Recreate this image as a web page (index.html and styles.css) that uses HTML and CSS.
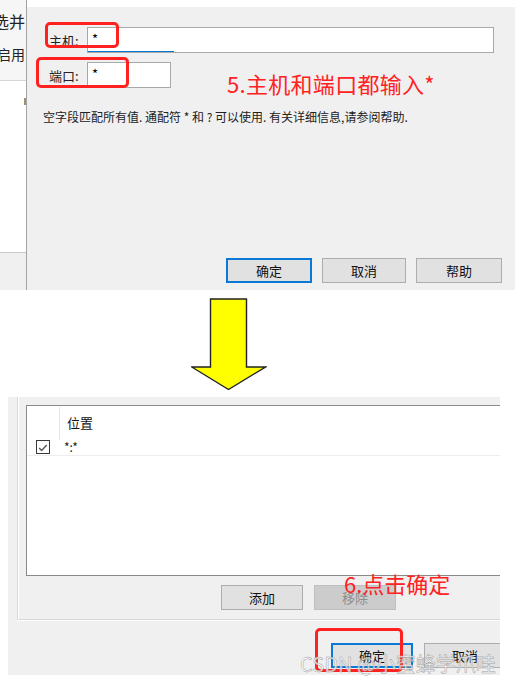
FILE: index.html
```html
<!DOCTYPE html>
<html lang="zh-CN">
<head>
<meta charset="utf-8">
<title>主机和端口</title>
<link rel="stylesheet" href="styles.css">
</head>
<body>
<div class="page">
  <section class="top">
    <div class="strip">
      <div class="strip-head">
        <div class="strip-line l1"><span>选并</span></div>
        <div class="strip-line l2"><span>启用</span></div>
      </div>
      <div class="strip-body"><span class="tick"></span></div>
      <div class="strip-foot"></div>
    </div>
    <div class="dialog">
      <div class="field-row host-row">
        <label class="label">主机:</label>
        <div class="input host-input">*</div>
      </div>
      <div class="field-row port-row">
        <label class="label">端口:</label>
        <div class="input port-input">*</div>
        <div class="note note-5">5.主机和端口都输入*</div>
      </div>
      <p class="desc">空字段匹配所有值. 通配符 * 和 ? 可以使用. 有关详细信息,请参阅帮助.</p>
      <div class="btn-row">
        <button class="btn btn-default w85">确定</button>
        <button class="btn w84">取消</button>
        <button class="btn w85">帮助</button>
      </div>
      <span class="mark mark-host"></span>
      <span class="mark mark-port"></span>
    </div>
  </section>

  <div class="arrow-wrap">
    <svg class="arrow" width="76" height="93" viewBox="0 0 76 93">
      <polygon points="19.5,1 55.5,1 55.5,69 74.5,69 37.5,91.5 0.8,69 19.5,69" fill="#ffff00" stroke="#222" stroke-width="1.4" stroke-linejoin="miter"/>
    </svg>
  </div>

  <section class="bottom-wrap">
    <div class="bottom">
      <div class="group">
        <div class="list">
          <div class="list-head">
            <div class="head-check"></div>
            <div class="head-text">位置</div>
          </div>
          <div class="list-row">
            <div class="row-check">
              <svg class="checkbox" width="14" height="14" viewBox="0 0 14 14">
                <rect x="0.5" y="0.5" width="13" height="13" fill="#fff" stroke="#3a3a3a"/>
                <path d="M3.2 8 L5.6 10.4 L10.8 5" fill="none" stroke="#555" stroke-width="1.4"/>
              </svg>
            </div>
            <div class="row-text">*:*</div>
          </div>
        </div>
        <div class="group-btns">
          <button class="btn w82">添加</button>
          <button class="btn btn-disabled w82">移除</button>
        </div>
        <div class="note note-6">6.点击确定</div>
      </div>
      <div class="dlg-btns">
        <button class="btn btn-default w82">确定</button>
        <button class="btn w82">取消</button>
      </div>
      <span class="mark mark-ok"></span>
    </div>
    <div class="watermark">CSDN @小蜜蜂学爪哇</div>
  </section>
</div>
</body>
</html>
```

FILE: styles.css
```css
* { box-sizing: border-box; }

html, body {
  margin: 0;
  padding: 0;
  background: #ffffff;
}

body {
  font-family: "Noto Sans CJK SC", "Noto Sans", "Liberation Sans", sans-serif;
  color: #000;
}

.page {
  width: 515px;
  overflow: hidden;
}

/* ---------- top dialog ---------- */
.top {
  display: flex;
  height: 290px;
}

.strip {
  width: 27px;
  flex: none;
  display: flex;
  flex-direction: column;
  border-right: 1px solid #a3a3a3;
  overflow: hidden;
}

.strip-head {
  height: 81px;
  background: #f6f6f6;
  border-bottom: 1px solid #d6d6d6;
}

.strip-line {
  width: 26px;
  overflow: hidden;
  white-space: nowrap;
  color: #222;
}

.strip-line span {
  display: block;
  width: 60px;
}

.strip-line.l1 {
  font-size: 16px;
  line-height: 18px;
  margin-top: 12px;
}

.strip-line.l1 span { margin-left: -7px; }

.strip-line.l2 {
  font-size: 14px;
  line-height: 18px;
  margin-top: 15px;
}

.strip-line.l2 span { margin-left: -3px; }

.strip-body {
  height: 172px;
  background: #ffffff;
  border-bottom: 1px solid #c8c8c8;
  position: relative;
}

.tick {
  position: absolute;
  left: 24px;
  top: 17px;
  width: 2px;
  height: 7px;
  background: #a09070;
}

.strip-foot {
  flex: 1;
  background: #f0f0f0;
}

.dialog {
  flex: 1;
  margin-top: 7px;
  background: #f0f0f0;
  display: flex;
  flex-direction: column;
  position: relative;
}

.field-row {
  display: flex;
  align-items: flex-start;
  padding-left: 22px;
}

.host-row { margin-top: 20px; }
.port-row { margin-top: 8px; }

.label {
  width: 38px;
  font-size: 13px;
  line-height: 27px;
  color: #222;
}

.input {
  height: 26px;
  background: #ffffff;
  border: 1px solid #a8a8a8;
  font-size: 13px;
  line-height: 22px;
  padding-left: 4px;
  color: #000;
}

.host-input {
  width: 407px;
  background: linear-gradient(#0078d7, #0078d7) no-repeat 0 100% / 86px 1px, #ffffff;
}

.port-input {
  width: 84px;
}

.note {
  color: #ff2222;
  font-size: 22px;
  line-height: 22px;
  white-space: nowrap;
}

.note-5 {
  margin-left: 56px;
  margin-top: 10px;
  letter-spacing: 0.3px;
}

.desc {
  margin: 15px 0 0 0;
  padding-left: 16px;
  font-size: 12px;
  line-height: 16px;
  color: #222;
  white-space: nowrap;
}

.btn-row {
  margin-top: auto;
  display: flex;
  justify-content: flex-end;
  gap: 10px;
  padding-right: 13px;
  padding-bottom: 7px;
}

.btn {
  height: 25px;
  background: #e1e1e1;
  border: 1px solid #adadad;
  font-family: "Noto Sans CJK SC", "Noto Sans", sans-serif;
  font-size: 13px;
  line-height: 21px;
  color: #111;
  padding: 0;
  flex: none;
}

.btn-default {
  border: 2px solid #0a78d4;
}

.btn-disabled {
  background: #cccccc;
  border-color: #bfbfbf;
  color: #8c8c8c;
}

.w82 { width: 82px; }
.w84 { width: 84px; }
.w85 { width: 86px; }

.mark {
  position: absolute;
  border: 3px solid #ff2020;
  border-radius: 5px;
}

.mark-host {
  left: 18px;
  top: 15px;
  width: 74px;
  height: 26px;
}

.mark-port {
  left: 9px;
  top: 50px;
  width: 93px;
  height: 31px;
}

/* ---------- arrow ---------- */
.arrow-wrap {
  height: 107px;
  padding-top: 8px;
  padding-left: 191px;
}

.arrow { display: block; }

/* ---------- bottom dialog ---------- */
.bottom-wrap {
  position: relative;
  height: 290px;
}

.bottom {
  position: relative;
  margin-left: 8px;
  width: 492px;
  height: 278px;
  background: #f0f0f0;
  overflow: hidden;
}

.group {
  position: relative;
  margin-left: 9px;
  height: 223px;
  border-left: 1px solid #d8d8d8;
  border-bottom: 1px solid #d8d8d8;
  box-shadow: inset 1px 0 0 #ffffff, 0 1px 0 #ffffff;
  padding-left: 8px;
  padding-top: 8px;
}

.list {
  width: 490px;
  height: 171px;
  background: #ffffff;
  border: 1px solid #8a8a8a;
}

.list-head,
.list-row {
  display: grid;
  grid-template-columns: 33px 1fr;
}

.list-head { height: 31px; }

.head-check {
  border-right: 1px solid #e6e6e6;
  margin-top: 1px;
}

.head-text {
  padding-left: 7px;
  font-size: 13px;
  line-height: 34px;
  color: #111;
}

.list-row {
  height: 19px;
  border-bottom: 1px solid #eeeeee;
}

.row-check {
  padding-left: 9px;
  padding-top: 3px;
}

.checkbox { display: block; }

.row-text {
  padding-left: 4px;
  font-size: 12px;
  line-height: 20px;
  color: #222;
}

.group-btns {
  display: flex;
  gap: 11px;
  margin-top: 9px;
  margin-left: 195px;
}

.note-6 {
  position: absolute;
  left: 326px;
  top: 175px;
}

.dlg-btns {
  display: flex;
  gap: 11px;
  margin-top: 23px;
  padding-left: 323px;
}

.mark-ok {
  left: 307px;
  top: 231px;
  width: 88px;
  height: 44px;
}

.watermark {
  position: absolute;
  left: 300px;
  top: 255px;
  font-size: 20px;
  line-height: 24px;
  white-space: nowrap;
  color: rgba(255, 255, 255, 0.75);
  -webkit-text-stroke: 0.5px #a0a0a0;
}
```
